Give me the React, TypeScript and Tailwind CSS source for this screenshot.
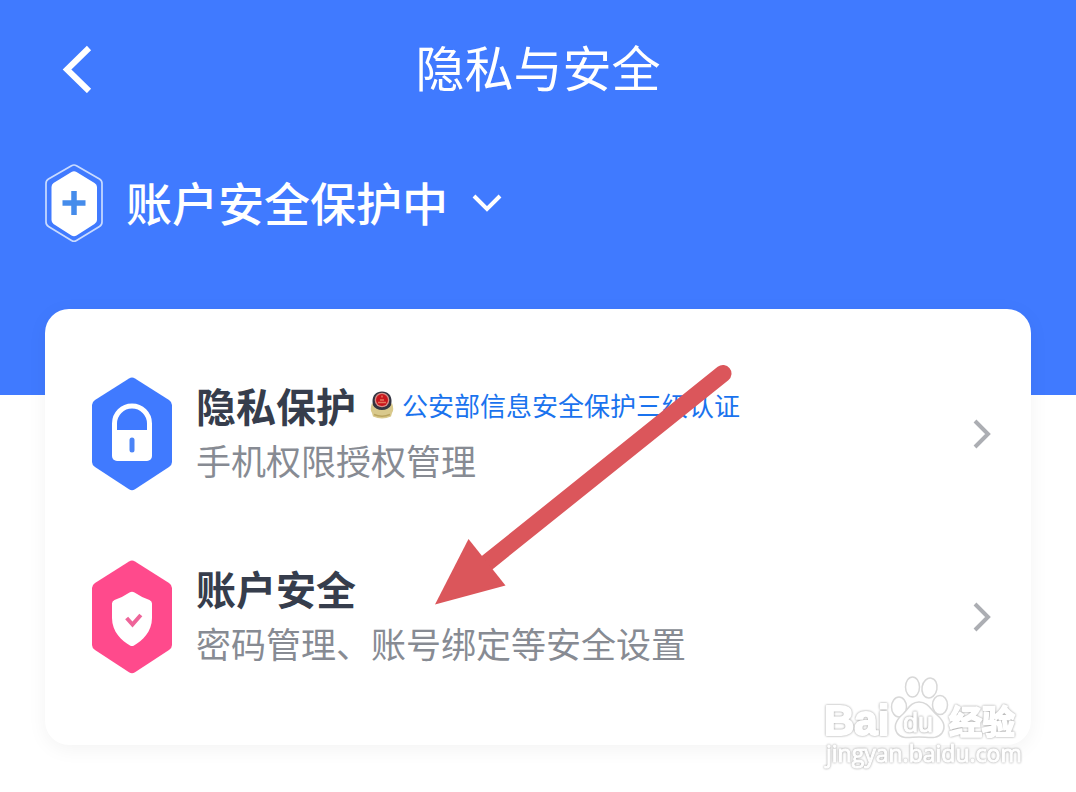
import type { ReactNode } from 'react';

interface Entry {
  id: string;
  title: string;
  desc: string;
  icon: ReactNode;
  cert?: string;
}

const entries: Entry[] = [
  { id: 'privacy', title: '隐私保护', desc: '手机权限授权管理', icon: <LockIcon />, cert: '公安部信息安全保护三级认证' },
  { id: 'account', title: '账户安全', desc: '密码管理、账号绑定等安全设置', icon: <ShieldIcon /> },
];

export default function App() {
  return (
    <div className="relative bg-white pb-12 font-['Noto_Sans_CJK_SC',sans-serif]">
      <header className="bg-[#407aff] pb-[152px] text-white">
        <div className="grid h-[138px] grid-cols-[1fr_auto_1fr] items-center">
          <button type="button" aria-label="返回" className="ml-[61px] w-8">
            <svg viewBox="0 0 32 48" className="h-12 w-8" fill="none" stroke="currentColor" strokeWidth="6">
              <path d="M28 3 6 24.500 28 46" />
            </svg>
          </button>
          <h1 className="pb-2 text-[49px] leading-none">隐私与安全</h1>
        </div>
        <button type="button" className="mt-[25px] ml-11 flex h-20 items-center">
          <BadgeIcon />
          <span className="ml-[22px] pb-1 text-[46px] leading-none font-medium">账户安全保护中</span>
          <svg viewBox="0 0 30 18" className="ml-6 h-[18px] w-[30px]" fill="none" stroke="currentColor" strokeWidth="4">
            <path d="M2 2 15 15 28 2" />
          </svg>
        </button>
      </header>

      <main className="relative mx-[45px] -mt-[86px] flex flex-col gap-[69px] rounded-3xl bg-white pt-[68px] pb-[71px] shadow-[0_4px_20px_rgba(0,0,0,0.05)]">
        {entries.map((e) => (
          <EntryRow key={e.id} entry={e} />
        ))}
      </main>

      <Arrow />
      <Watermark />
    </div>
  );
}

function EntryRow({ entry }: { entry: Entry }) {
  return (
    <button type="button" className="flex items-center pr-10 pl-[47px] text-left">
      {entry.icon}
      <span className="ml-6 flex flex-1 flex-col pb-1">
        <span className="flex h-14 items-center">
          <span className="text-[40px] leading-none font-bold text-[#363d4c]">{entry.title}</span>
          {entry.cert && (
            <>
              <PoliceBadge />
              <span className="ml-2 text-[26px] leading-none text-[#1a73ee]">{entry.cert}</span>
            </>
          )}
        </span>
        <span className="text-[35px] leading-[54px] text-[#878b93]">{entry.desc}</span>
      </span>
      <svg viewBox="0 0 18 30" className="h-[30px] w-[18px]" fill="none" stroke="#acaeb3" strokeWidth="4">
        <path d="M2 2 15 15 2 28" />
      </svg>
    </button>
  );
}

function BadgeIcon() {
  return (
    <svg viewBox="0 0 60 80" className="h-20 w-15">
      <path d="M27.500 2.700Q30 1.300 32.500 2.700L55.500 16Q58 17.500 58 20.500V59Q58 62 55.500 63.500L32.500 77.500Q30 79 27.500 77.500L4.500 63.500Q2 62 2 59V20.500Q2 17.500 4.500 16Z" fill="none" stroke="#c9dbff" strokeWidth="1.700" />
      <path d="M27.500 9Q30 7.500 32.500 9L50.500 20Q53 21.500 53 24V57Q53 59.500 50.500 61L32.500 72.500Q30 74 27.500 72.500L9.500 61Q7.500 59.500 7.500 57V24Q7.500 21.500 9.500 20Z" fill="#fff" />
      <path d="M30 28V52M18.500 40H41.500" stroke="#458ceb" strokeWidth="5.500" />
    </svg>
  );
}

function LockIcon() {
  return (
    <svg viewBox="0 0 80 114" className="h-[114px] w-20">
      <Hexagon fill="#407aff" />
      <path d="M22.500 58V46.500a17.500 17.500 0 0 1 35 0V58" fill="none" stroke="#fff" strokeWidth="5" />
      <path d="M20 53H60V79a5 5 0 0 1-5 5H25a5 5 0 0 1-5-5Z" fill="#fff" />
      <path d="M40 63V73" stroke="#4b84f7" strokeWidth="5" strokeLinecap="round" />
    </svg>
  );
}

function ShieldIcon() {
  return (
    <svg viewBox="0 0 80 114" className="h-[114px] w-20">
      <Hexagon fill="#ff4a8c" />
      <path d="M37.500 32.500Q40 31 42.500 32.500Q49 37 57.500 40Q60 41 60 43.500V58C60 72 50 81 42 85.500Q40 86.500 38 85.500C30 81 20 72 20 58V43.500Q20 41 22.500 40Q31 37 37.500 32.500Z" fill="#fff" />
      <path d="M36 59.500 40.500 64.500 47.500 56.500" fill="none" stroke="#ee6499" strokeWidth="4" strokeLinecap="square" />
    </svg>
  );
}

function Hexagon({ fill }: { fill: string }) {
  return <path d="M37 1.400Q40-.4 43 1.400L77 23Q80 25 80 28V85Q80 88 77 90L43 112.300Q40 114.200 37 112.300L3 90Q0 88 0 85V28Q0 25 3 23Z" fill={fill} />;
}

function PoliceBadge() {
  return (
    <svg viewBox="0 0 24 30" className="ml-[14px] h-[30px] w-6">
      <path d="M2 13Q-.5 20 2 23L3 26.500Q12 30.500 21 26.500L22 23Q24.500 20 22 13L17 20H7Z" fill="#d9c98c" />
      <path d="M12 1.500C18 1.500 21.500 5.500 21.500 11C21.500 17 18 23 12 25C6 23 2.500 17 2.500 11C2.500 5.500 6 1.500 12 1.500Z" fill="#343441" />
      <path d="M2.500 15Q2 22 6 25.500H18Q22 22 21.500 15Q18 20 12 20T2.500 15Z" fill="#d9c98c" />
      <circle cx="12" cy="10" r="7.300" fill="#d98e87" />
      <circle cx="12" cy="10" r="6" fill="#c9161c" />
      <path d="M8 12.500H16M10 10H14M12 5.500V7.500" stroke="#e4755a" strokeWidth="1.500" />
      <path d="M4 24.500Q12 28 20 24.500" fill="none" stroke="#bba55f" strokeWidth="1.500" />
    </svg>
  );
}

function Arrow() {
  return (
    <svg viewBox="0 0 300 244" className="pointer-events-none absolute top-[363px] left-[433px] h-[244px] w-[300px]" aria-hidden="true">
      <path d="M290 10.500 50 203" stroke="#db565b" strokeWidth="17" strokeLinecap="round" />
      <path d="M2 241.500 35.500 176 72.500 222.500Z" fill="#db565b" />
    </svg>
  );
}

function Watermark() {
  return (
    <svg viewBox="0 0 204 104" className="pointer-events-none absolute top-[672px] left-[820px] h-[104px] w-[204px]" fill="#fff" stroke="#fff" strokeWidth="2" strokeLinejoin="round">
      <text x="4" y="63" className="font-['Liberation_Sans',sans-serif] text-[42px] font-bold drop-shadow-[0_0_1px_#999]">Bai</text>
      <g stroke="#d8d8d8" strokeWidth="1.500">
        <ellipse cx="79" cy="35" rx="7.500" ry="10" />
        <ellipse cx="92.500" cy="15" rx="7" ry="10" />
        <ellipse cx="109.500" cy="16" rx="7.500" ry="10" transform="rotate(10 109.500 16)" />
        <ellipse cx="120" cy="33" rx="7.500" ry="9.500" />
        <path d="M99 30C108 30 111 38 117 43C124 49 126 55 122 61C117 68 108 65 99 65S82 68 77 61C73 54 76 48 83 42C88 37 91 30 99 30Z" />
      </g>
      <text x="83" y="60" strokeWidth="1" className="font-['Liberation_Sans',sans-serif] text-[27px] drop-shadow-[0_0_1px_#888]">du</text>
      <text x="129" y="62" className="font-['Noto_Sans_CJK_SC',sans-serif] text-[33px] font-bold drop-shadow-[0_0_1px_#999]">经验</text>
      <text x="6" y="90" strokeWidth="1" className="font-['Open_Sans',sans-serif] text-[23px] drop-shadow-[0_0_1px_#999]">jingyan.baidu.com</text>
    </svg>
  );
}
